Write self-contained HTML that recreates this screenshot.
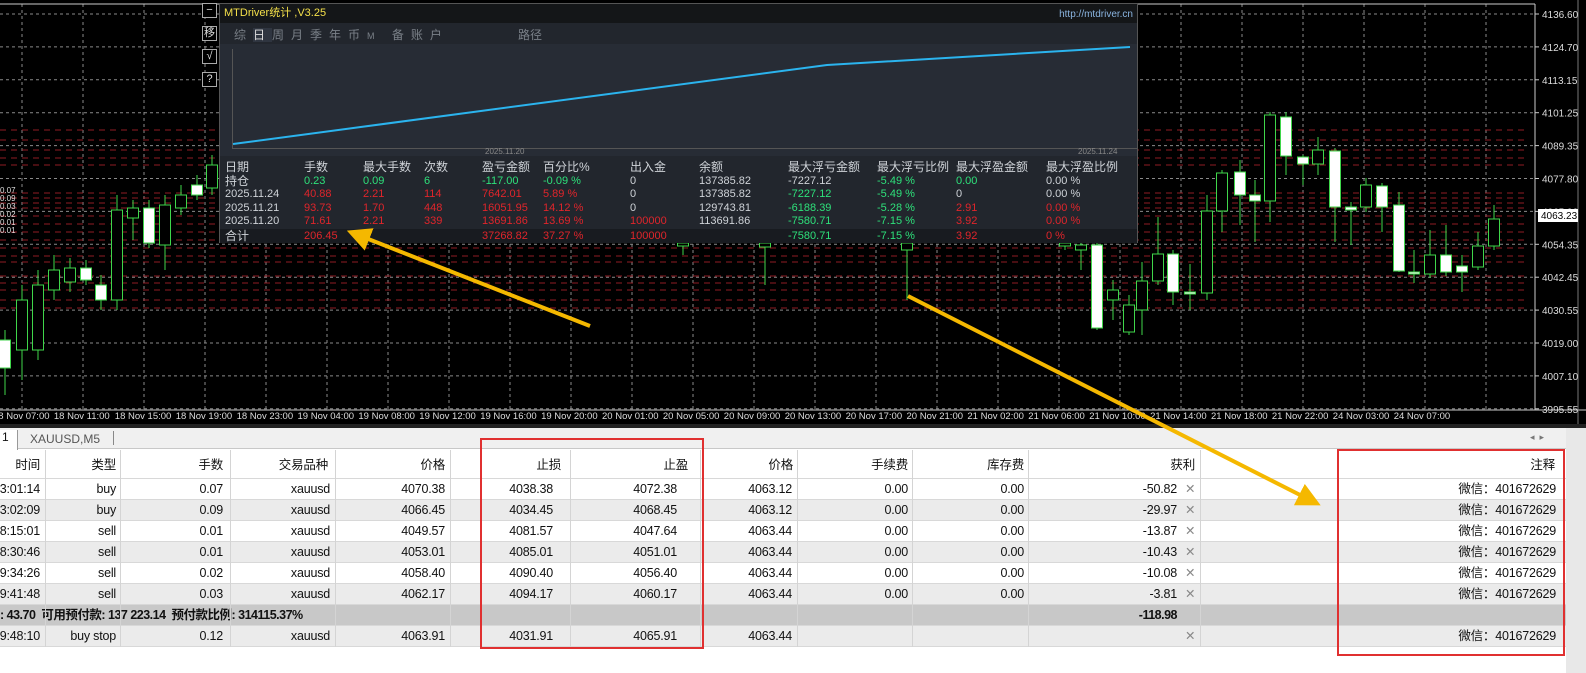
<!DOCTYPE html>
<html><head><meta charset="utf-8"><style>
*{margin:0;padding:0;box-sizing:border-box}
body{width:1586px;height:673px;overflow:hidden;background:#fff;font-family:"Liberation Sans","Noto Sans CJK SC",sans-serif;position:relative}
#chart{position:absolute;left:0;top:0;width:1586px;height:428px;background:#000}
.t{position:absolute;white-space:nowrap}
#panel{position:absolute;left:219px;top:3px;width:919px;height:240px;background:#22262d;border:1px solid #555}
.p{position:absolute;font-size:11px;line-height:13px;white-space:nowrap;color:#cfd3d8}
#tbl{position:absolute;left:0;top:428px;width:1586px;height:245px;background:#fff;font-size:12px;color:#111}
.row{position:absolute;left:0;width:1566px;height:21px;border-bottom:1px solid #d8d8d8;font-size:12.5px;line-height:15px;color:#111;letter-spacing:-0.2px}
.c{position:absolute;top:3px;white-space:nowrap;text-align:right}
.sep{position:absolute;top:450px;width:1px;height:197px;background:#d4d4d4}
</style></head><body>
<div id="chart">
<svg width="1586" height="428" style="position:absolute;left:0;top:0" id="sv"></svg>
</div>

<div id="panel">
 <div style="position:absolute;left:0;top:0;width:917px;height:19px;background:#141618"></div>
 <div class="p" style="left:4px;top:3px;color:#f4e04a">MTDriver统计 ,V3.25</div>
 <div class="p" style="right:4px;top:4px;color:#8ab4e0;font-size:10px">http://mtdriver.cn</div>
 <div class="p" style="left:14px;top:24px;font-size:12px;line-height:15px;color:#7a8088;letter-spacing:7px">综<span style="color:#ddd;background:#2f3540">日</span>周月季年币<span style="font-size:9px">M</span> 备账户</div>
 <div class="p" style="left:298px;top:24px;font-size:12px;line-height:15px;color:#7a8088">路径</div>
 <div style="position:absolute;left:0;top:40px;width:917px;height:112px;background:#272c35"></div>
 <div style="position:absolute;left:12px;top:45px;width:1px;height:100px;background:#555"></div>
 <div style="position:absolute;left:12px;top:144px;width:905px;height:1px;background:#555"></div>
 <div class="p" style="left:265px;top:141px;font-size:8px;color:#888">2025.11.20</div>
 <div class="p" style="left:858px;top:141px;font-size:8px;color:#888">2025.11.24</div>
 <svg width="917" height="240" style="position:absolute;left:0;top:0"><polyline points="13,140 607,61 910,43" fill="none" stroke="#2bb4ee" stroke-width="2"/></svg>
 <div style="position:absolute;left:0;top:225px;width:917px;height:14px;background:#181b20"></div>
 <div id="st"></div>
</div>

<div style="position:absolute;left:202px;top:3px" id="icons"></div>

<svg width="1586" height="673" style="position:absolute;left:0;top:0;z-index:5;pointer-events:none">
 <defs><marker id="ah" markerWidth="6" markerHeight="6" refX="3" refY="3" orient="auto"><path d="M0,0 L6,3 L0,6 Z" fill="#f5b800"/></marker></defs>
 <line x1="590" y1="326" x2="358" y2="235" stroke="#f5b800" stroke-width="4" marker-end="url(#ah)"/>
 <line x1="908" y1="296" x2="1310" y2="500" stroke="#f5b800" stroke-width="4" marker-end="url(#ah)"/>
 <rect x="481" y="439" width="222" height="209" fill="none" stroke="#e03030" stroke-width="2"/>
 <rect x="1338" y="450" width="226" height="205" fill="none" stroke="#e03030" stroke-width="2"/>
</svg>

<div id="tbl">
 <div style="position:absolute;left:0;top:0;width:1586px;height:21px;background:#f0f0f0;border-bottom:1px solid #c8c8c8"></div>
 <div class="t" style="left:0;top:2px;width:18px;height:20px;background:#fff;border-right:1px solid #999;padding-left:2px;font-size:12px">1</div>
 <div class="t" style="left:30px;top:4px;font-size:12px;color:#555">XAUUSD,M5</div>
 <div style="position:absolute;left:113px;top:3px;width:1px;height:14px;background:#888"></div>
 <div class="t" style="left:1530px;top:4px;font-size:9px;color:#777">◂ &nbsp;▸</div>
 <div style="position:absolute;left:1566px;top:0;width:20px;height:245px;background:#e8e8e8"></div>
</div>
<div id="rows"></div>

<script>
var s='';
var yl=[14,46.9,79.8,112.7,145.6,178.5,211.4,244.3,277.2,310.1,343,375.9,408.8];
for(var i=0;i<yl.length;i++) s+='<line x1="0" x2="1535" y1="'+yl[i]+'" y2="'+yl[i]+'" stroke="#8a8a8a" stroke-dasharray="3,3" stroke-width="1"/>';
for(var x=-7+29;x<1535;x+=61) s+='<line x1="'+x+'" x2="'+x+'" y1="4" y2="409" stroke="#8a8a8a" stroke-dasharray="3,3"/>';
var red=[130,140,150,158,165,193,198,203,208,216,224,232,240,248,256,262,276,283,290,300,308];
for(var i=0;i<red.length;i++) s+='<line x1="0" x2="1527" y1="'+red[i]+'" y2="'+red[i]+'" stroke="#a8202a" stroke-dasharray="6,5" opacity=".85"/>';
s+='<line x1="1535" x2="1535" y1="4" y2="410" stroke="#ccc"/><line x1="0" x2="1535" y1="4" y2="4" stroke="#ccc"/><line x1="0" x2="1586" y1="410" y2="410" stroke="#ccc"/>';
s+='<line x1="1578" x2="1578" y1="0" y2="428" stroke="#777"/>';
var C=[[5,340,368,330,395,1],[22,300,350,285,380,0],[38,285,350,270,360,0],[54,270,290,255,300,0],[70,268,282,258,292,0],[86,268,280,260,285,1],[101,285,300,275,310,1],[117,210,300,195,310,0],[133,208,218,200,240,0],[149,208,243,200,248,1],[165,205,245,195,270,0],[181,195,208,185,215,0],[197,185,195,175,200,1],[212,165,188,155,195,0],
[683,243,246,243,255,0],[765,243,247,243,285,0],[907,243,250,243,300,0],[1065,243,246,243,250,0],[1081,245,250,243,270,0],[1097,245,328,243,330,1],[1113,290,300,280,320,0],[1129,305,332,295,335,0],
[1142,281,310,262,335,0],[1158,254,281,217,285,0],[1173,254,292,250,305,1],[1190,292,294,264,310,1],[1207,211,293,195,300,0],[1222,173,211,170,232,0],[1240,172,195,160,225,1],[1255,195,201,180,242,1],[1270,115,201,112,222,0],[1286,117,156,112,175,1],[1303,157,164,155,185,1],[1318,150,164,137,175,0],[1335,151,207,148,242,1],[1351,207,210,202,245,1],[1366,185,207,178,212,0],[1382,186,207,183,232,1],[1399,205,271,192,272,1],[1414,272,274,250,283,1],[1430,255,274,230,278,0],[1446,255,272,225,276,1],[1462,266,272,255,292,1],[1478,246,267,232,270,0],[1494,219,246,205,250,0]];
for(var i=0;i<C.length;i++){var c=C[i];s+='<line x1="'+c[0]+'" x2="'+c[0]+'" y1="'+c[3]+'" y2="'+c[4]+'" stroke="#3fd64a"/>';s+='<rect x="'+(c[0]-5.5)+'" y="'+c[1]+'" width="11" height="'+Math.max(2,c[2]-c[1])+'" fill="'+(c[5]?'#fff':'#000')+'" stroke="#3fd64a"/>';}
var pv=['4136.60','4124.70','4113.15','4101.25','4089.35','4077.80','4065.90','4054.35','4042.45','4030.55','4019.00','4007.10','3995.55'];
for(var i=0;i<pv.length;i++){s+='<line x1="1535" x2="1539" y1="'+yl[i]+'" y2="'+yl[i]+'" stroke="#ccc"/><text x="1542" y="'+(yl[i]+4)+'" fill="#ddd" font-size="10" font-family="Liberation Sans">'+pv[i]+'</text>';}
s+='<rect x="1538" y="209" width="40" height="13" fill="#fff"/><text x="1541" y="219" font-size="10" fill="#000" font-family="Liberation Sans">4063.23</text>';
var tl=['18 Nov 07:00','18 Nov 11:00','18 Nov 15:00','18 Nov 19:00','18 Nov 23:00','19 Nov 04:00','19 Nov 08:00','19 Nov 12:00','19 Nov 16:00','19 Nov 20:00','20 Nov 01:00','20 Nov 05:00','20 Nov 09:00','20 Nov 13:00','20 Nov 17:00','20 Nov 21:00','21 Nov 02:00','21 Nov 06:00','21 Nov 10:00','21 Nov 14:00','21 Nov 18:00','21 Nov 22:00','24 Nov 03:00','24 Nov 07:00'];
for(var i=0;i<tl.length;i++){var x=-7+i*60.9;s+='<text x="'+x+'" y="419" fill="#ddd" font-size="9.5" font-family="Liberation Sans">'+tl[i]+'</text>';}
s+='<rect x="0" y="424" width="1586" height="4" fill="#222"/>';
for(var i=0;i<6;i++) s+='<text x="0" y="'+(193+i*8)+'" fill="#ddd" font-size="8">'+['0.07','0.09','0.03','0.02','0.01','0.01'][i]+'</text>';
document.getElementById('sv').innerHTML=s;
var ic=['−','移','√','?'],h='';
for(var i=0;i<4;i++)h+='<div style="position:absolute;left:0;top:'+(i*23)+'px;width:15px;height:15px;border:1px solid #aaa;color:#ddd;font-size:11px;text-align:center;line-height:13px;background:#000">'+ic[i]+'</div>';
document.getElementById('icons').innerHTML=h;
var cx=[5,84,143,204,262,323,410,479,568,657,736,826];
var R=[
[['日期','手数','最大手数','次数','盈亏金额','百分比%','出入金','余额','最大浮亏金额','最大浮亏比例','最大浮盈金额','最大浮盈比例'],'wwwwwwwwwwww'],
[['持仓','0.23','0.09','6','-117.00','-0.09 %','0','137385.82','-7227.12','-5.49 %','0.00','0.00 %'],'wggggggwwggww'],
[['2025.11.24','40.88','2.21','114','7642.01','5.89 %','0','137385.82','-7227.12','-5.49 %','0','0.00 %'],'wrrrrrwwggww'],
[['2025.11.21','93.73','1.70','448','16051.95','14.12 %','0','129743.81','-6188.39','-5.28 %','2.91','0.00 %'],'wrrrrrwwggrr'],
[['2025.11.20','71.61','2.21','339','13691.86','13.69 %','100000','113691.86','-7580.71','-7.15 %','3.92','0.00 %'],'wrrrrrrwggrr'],
[['合计','206.45','','','37268.82','37.27 %','100000','','-7580.71','-7.15 %','3.92','0 %'],'wrrrrrrwggrr']];
var ty=[157,171,184,198,211,226],o='';
for(var r=0;r<R.length;r++)for(var k=0;k<12;k++){var col=R[r][1][k];if(r==1&&k==6)col='w';var cl=col=='g'?'#2ee07a':col=='r'?'#e0252b':'#cfd3d8';var fs=(r==0||k==0&&(r==1||r==5))?12:11;o+='<div class="p" style="left:'+cx[k]+'px;top:'+ty[r]+'px;color:'+cl+';font-size:'+fs+'px">'+R[r][0][k]+'</div>';}
document.getElementById('st').innerHTML=o;
var rx=[40,116,223,330,445,553,677,792,908,1024,1177];
var hd=['时间','类型','手数','交易品种','价格','止损','止盈','价格','手续费','库存费','获利'];
var hx=[40,116,223,328,445,561,688,793,908,1024,1195];
var D=[['03:01:14','buy','0.07','xauusd','4070.38','4038.38','4072.38','4063.12','0.00','0.00','-50.82'],
['03:02:09','buy','0.09','xauusd','4066.45','4034.45','4068.45','4063.12','0.00','0.00','-29.97'],
['08:15:01','sell','0.01','xauusd','4049.57','4081.57','4047.64','4063.44','0.00','0.00','-13.87'],
['08:30:46','sell','0.01','xauusd','4053.01','4085.01','4051.01','4063.44','0.00','0.00','-10.43'],
['09:34:26','sell','0.02','xauusd','4058.40','4090.40','4056.40','4063.44','0.00','0.00','-10.08'],
['09:41:48','sell','0.03','xauusd','4062.17','4094.17','4060.17','4063.44','0.00','0.00','-3.81']];
var q='<div class="row" style="top:450px;height:29px;background:#fff">';
for(var k=0;k<11;k++)q+='<div class="c" style="right:'+(1566-hx[k])+'px;top:8px">'+hd[k]+'</div>';
q+='<div class="c" style="right:11px;top:8px">注释</div></div>';
for(var i=0;i<6;i++){q+='<div class="row" style="top:'+(479+i*21)+'px;background:'+(i%2?'#ebebeb':'#fff')+'">';for(var k=0;k<11;k++)q+='<div class="c" style="right:'+(1566-rx[k])+'px">'+D[i][k]+'</div>';q+='<div class="c" style="left:1185px;color:#888">✕</div><div class="c" style="right:10px">微信：401672629</div></div>';}
q+='<div class="row" style="top:605px;background:#c8c8c8;font-weight:bold;letter-spacing:-0.5px"><div class="c" style="left:0">: 43.70 &nbsp;可用预付款: 137 223.14 &nbsp;预付款比例: 314115.37%</div><div class="c" style="right:'+(1566-1177)+'px">-118.98</div></div>';
q+='<div class="row" style="top:626px;background:#ebebeb">';
var L=['09:48:10','buy stop','0.12','xauusd','4063.91','4031.91','4065.91','4063.44','','',''];
for(var k=0;k<11;k++)q+='<div class="c" style="right:'+(1566-rx[k])+'px">'+L[k]+'</div>';
q+='<div class="c" style="left:1185px;color:#888">✕</div><div class="c" style="right:10px">微信：401672629</div></div>';
var sp=[45,120,230,335,450,570,700,797,912,1028,1200];
for(var k=0;k<sp.length;k++)q+='<div class="sep" style="left:'+sp[k]+'px;'+(k>=0?'':'')+'"></div>';
document.getElementById('rows').innerHTML=q;
</script>
</body></html>
